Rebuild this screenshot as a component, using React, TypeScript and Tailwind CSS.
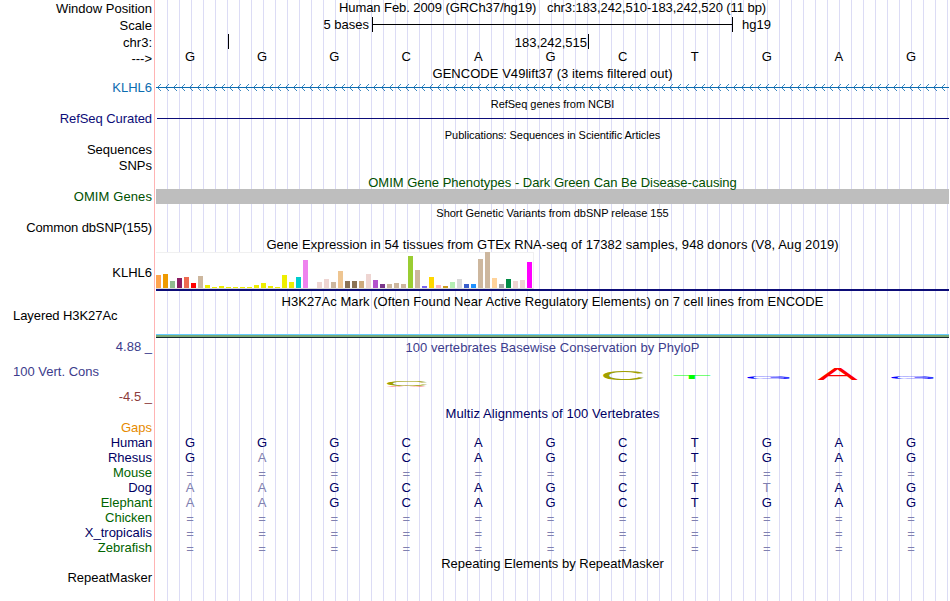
import React from 'react';
import clsx from 'clsx';

type Label = { text: string; color?: string; className?: string };

const NAVY = 'text-[#000064]';
const GREEN = 'text-[#006400]';

const labels: Label[] = [
  { text: 'Window Position', className: 'mt-px' },
  { text: 'Scale', className: 'mt-0.5' },
  { text: 'chr3:', className: 'mt-0.5' },
  { text: '--->', className: 'mt-px' },
  { text: 'KLHL6', color: 'text-[#0c6cb0]', className: 'mt-3.5' },
  { text: 'RefSeq Curated', color: 'text-[#0c0c78]', className: 'mt-4 tracking-[-0.07px]' },
  { text: 'Sequences', className: 'mt-4' },
  { text: 'SNPs', className: 'mt-px' },
  { text: 'OMIM Genes', color: 'text-[#005000]', className: 'mt-4 tracking-[0.1px]' },
  { text: 'Common dbSNP(155)', className: 'mt-4 tracking-[-0.12px]' },
  { text: 'KLHL6', className: 'mt-[30px]' },
  { text: 'Layered H3K27Ac', className: 'mt-7 self-start ml-[13px] tracking-[-0.07px]' },
  { text: '4.88 _', color: 'text-[#3c3c8c]', className: 'mt-4' },
  { text: '100 Vert. Cons', color: 'text-[#3c3c8c]', className: 'mt-2.5 self-start ml-[13px]' },
  { text: '-4.5 _', color: 'text-[#8c3c3c]', className: 'mt-2.5' },
  { text: 'Gaps', color: 'text-[#e68a00]', className: 'mt-4' },
  { text: 'Human', color: NAVY, className: 'tracking-[-0.15px]' },
  { text: 'Rhesus', color: NAVY },
  { text: 'Mouse', color: GREEN },
  { text: 'Dog', color: NAVY },
  { text: 'Elephant', color: GREEN },
  { text: 'Chicken', color: GREEN },
  { text: 'X_tropicalis', color: NAVY },
  { text: 'Zebrafish', color: GREEN },
  { text: 'RepeatMasker', className: 'mt-[15px]' },
];

const REFERENCE = 'GGGCAGCTGAG';

// one string per species, Human first
const alignments = [
  'GGGCAGCTGAG',
  'GAGCAGCTGAG',
  '===========',
  'AAGCAGCTTAG',
  'AAGCAGCTGAG',
  '===========',
  '===========',
  '===========',
];

// GTEx tissues: [color, bar height]
const tissues: [string, number][] = [
  ['#ffa54f', 13], ['#ee9a00', 14], ['#8fbc8f', 7], ['#8b1c62', 10], ['#ee6a50', 11], ['#ff0000', 5],
  ['#cdb79e', 12], ['#eeee00', 3], ['#eeee00', 1], ['#eeee00', 2], ['#eeee00', 1], ['#eeee00', 1],
  ['#eeee00', 1], ['#eeee00', 1], ['#eeee00', 3], ['#eeee00', 5], ['#eeee00', 2], ['#eeee00', 1],
  ['#eeee00', 13], ['#eeee00', 6], ['#00cdcd', 11], ['#ee82ee', 28], ['#9ac0cd', 0], ['#eed5d2', 6],
  ['#eed5d2', 9], ['#cdb79e', 6], ['#eec591', 17], ['#8b7355', 7], ['#8b7355', 7], ['#cdaa7d', 7],
  ['#eed5d2', 14], ['#b452cd', 8], ['#7a378b', 4], ['#cdb79e', 4], ['#cdb79e', 5], ['#cdb79e', 4],
  ['#9acd32', 32], ['#cdb79e', 18], ['#7a67ee', 2], ['#ffd700', 11], ['#ffb6c1', 3], ['#cd9b1d', 2],
  ['#b4eeb4', 6], ['#d9d9d9', 9], ['#3a5fcd', 4], ['#1e90ff', 4], ['#cdb79e', 29], ['#cdb79e', 36],
  ['#ffd39b', 10], ['#a6a6a6', 4], ['#008b45', 9], ['#eed5d2', 7], ['#eed5d2', 8], ['#ff00ff', 26],
];

// conservation logo letters, squashed to their score
const logo = [
  { base: 'C', x: 227.8, y: 30.9, sx: 0.637, sy: 0.08, color: '#a0a000' },
  { base: 'A', x: 230.4, y: 32, sx: 0.6, sy: 0.014, color: '#ff0000' },
  { base: 'C', x: 444.1, y: 24.8, sx: 0.637, sy: 0.136, color: '#a0a000' },
  { base: 'T', x: 516, y: 24, sx: 0.65, sy: 0.062, color: '#00ff00' },
  { base: 'G', x: 588.1, y: 24, sx: 0.647, sy: 0.026, color: '#0000ff' },
  { base: 'A', x: 661.6, y: 25, sx: 0.605, sy: 0.158, color: '#ff0000' },
  { base: 'G', x: 732.1, y: 24, sx: 0.647, sy: 0.026, color: '#0000ff' },
];

const Title: React.FC<{ className?: string; small?: boolean; children: React.ReactNode }> = ({ className, small, children }) => (
  <div className={clsx('h-[15px] text-center whitespace-pre', small ? 'text-[11px]/[15px]' : 'text-[13px]/[15px]', className)}>
    {children}
  </div>
);

const Bases: React.FC<{ seq: string; aligned?: boolean }> = ({ seq, aligned }) => (
  <div className="-ml-0.5 grid h-[15px] w-[793px] grid-cols-11 text-center">
    {seq.split('').map((b, i) => (
      <span
        key={i}
        className={clsx(
          aligned && (b === REFERENCE[i] ? 'text-[#000064]' : 'text-[#8080b0]'),
          b === '=' && 'translate-y-px'
        )}
      >
        {b}
      </span>
    ))}
  </div>
);

const ScaleBar = () => (
  <div className="mt-0.5 flex h-[15px]">
    <span className="w-[213px] text-right">5 bases</span>
    <div className="ml-[3px] flex w-[361px] items-center border-x border-black">
      <div className="h-px w-full bg-black" />
    </div>
    <span className="ml-[9px]">hg19</span>
  </div>
);

const Ruler = () => (
  <div className="mt-0.5 flex h-[15px]">
    <div className="ml-[72px] w-px bg-black" />
    <span className="w-[358px] pt-px text-right">183,242,515</span>
    <div className="ml-px w-px bg-black" />
  </div>
);

const GeneArrows = () => (
  <svg className="mt-[3px] block" width="793" height="7" fill="#0c6cb0" shapeRendering="crispEdges">
    <rect y="3" width="793" height="1" />
    {Array.from({ length: 99 }, (_, i) => (
      <path
        key={i}
        fillOpacity="0.8"
        transform={`translate(${i * 8})`}
        d="M2 2h1v1h-1zM3 1h1v1h-1zM4 0h1v1h-1zM2 4h1v1h-1zM3 5h1v1h-1zM4 6h1v1h-1z"
      />
    ))}
  </svg>
);

const Expression = () => (
  <div className="flex h-[37px] w-[378px] items-end gap-0.5 border-t border-r border-b border-[#f0f0f0] border-b-[#d8d8d8] bg-white">
    {tissues.map(([color, height], i) => (
      <div key={i} className="w-[5px] shrink-0" style={{ height, backgroundColor: color }} />
    ))}
  </div>
);

const ConservationLogo = () => (
  <svg className="block" width="793" height="51" fontFamily="Liberation Sans, sans-serif" fontSize="100">
    {logo.map((l, i) => (
      <text key={i} fill={l.color} transform={`translate(${l.x} ${l.y}) scale(${l.sx} ${l.sy})`}>
        {l.base}
      </text>
    ))}
  </svg>
);

export default function App() {
  return (
    <main className="flex h-[601px] w-[950px] overflow-hidden bg-white font-['Liberation_Sans',Arial,sans-serif] text-[13px]/[15px] text-black">
      <aside className="flex w-[152px] shrink-0 flex-col items-end">
        {labels.map((l, i) => (
          <div key={i} className={clsx('h-[15px] whitespace-pre', l.color, l.className)}>
            {l.text}
          </div>
        ))}
      </aside>

      <div className="ml-0.5 w-px shrink-0 bg-[#ffb4b4]" />

      <section className="ml-px w-[793px] shrink-0 bg-[repeating-linear-gradient(to_right,transparent_0,transparent_11px,#dcdcf5_11px,#dcdcf5_12px)]">
        <Title className="tracking-[-0.07px]">{'Human Feb. 2009 (GRCh37/hg19)   chr3:183,242,510-183,242,520 (11 bp)'}</Title>
        <ScaleBar />
        <Ruler />
        <Bases seq={REFERENCE} />

        <Title className="mt-0.5 tracking-[0.04px]">GENCODE V49lift37 (3 items filtered out)</Title>
        <GeneArrows />

        <Title small className="mt-1.5 tracking-[-0.03px]">RefSeq genes from NCBI</Title>
        <div className="mt-1.5 ml-px h-px bg-[#0c0c78]" />

        <Title small className="mt-[9px] tracking-[-0.05px]">Publications: Sequences in Scientific Articles</Title>

        <Title className="mt-8 text-[#005000]">OMIM Gene Phenotypes - Dark Green Can Be Disease-causing</Title>
        <div className="-mt-px h-[15px] bg-[#bebebe]" />

        <Title small className="mt-0.5 tracking-[-0.02px]">Short Genetic Variants from dbSNP release 155</Title>

        <Title className="mt-4 tracking-[0.055px]">Gene Expression in 54 tissues from GTEx RNA-seq of 17382 samples, 948 donors (V8, Aug 2019)</Title>
        <Expression />
        <div className="h-0.5 bg-[#0c0c78]" />

        <Title className="mt-[3px] tracking-[0.05px]">H3K27Ac Mark (Often Found Near Active Regulatory Elements) on 7 cell lines from ENCODE</Title>
        <div className="mt-[25px] h-1 border-t border-b border-t-[#66ccff] border-b-[#14282d] bg-[#78aa78]" />

        <Title className="mt-0.5 tracking-[0.04px] text-[#3c3c8c]">100 vertebrates Basewise Conservation by PhyloP</Title>
        <ConservationLogo />

        <Title className="tracking-[0.08px] text-[#000064]">Multiz Alignments of 100 Vertebrates</Title>
        <div className="mt-3.5">
          {alignments.map((seq, i) => (
            <Bases key={i} seq={seq} aligned />
          ))}
        </div>

        <Title className="mt-px">Repeating Elements by RepeatMasker</Title>
      </section>
    </main>
  );
}
